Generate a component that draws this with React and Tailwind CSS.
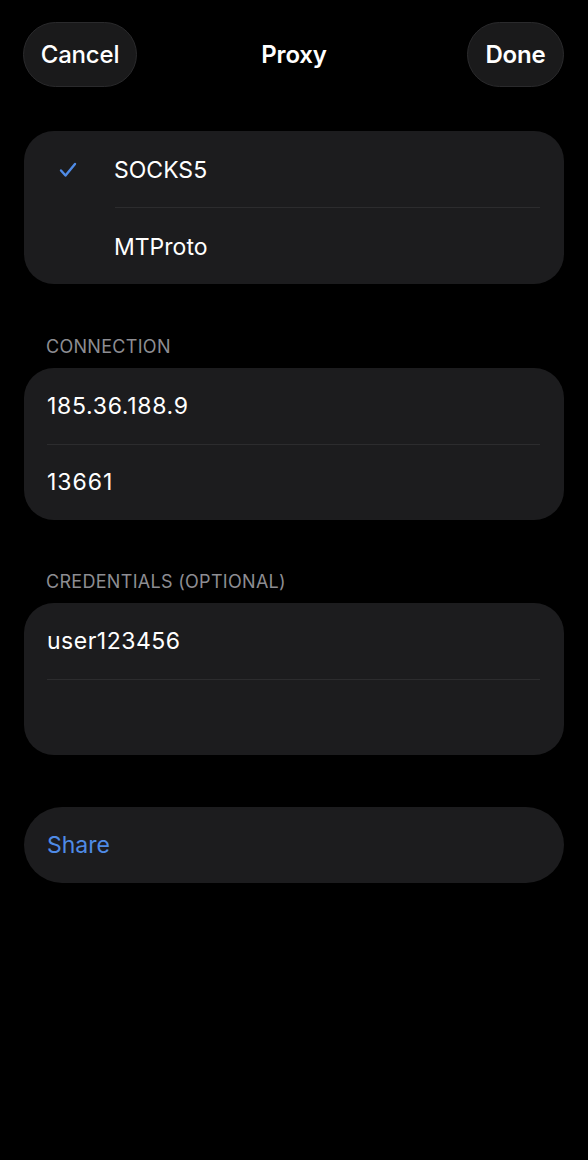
import { useState } from "react";

function Check() {
  return (
    <svg width="18" height="16" viewBox="0 0 18 16" fill="none" className="text-[#4f8be6]">
      <path d="M2 8.5l4.5 5L16 2" stroke="currentColor" strokeWidth="2.4" strokeLinecap="round" strokeLinejoin="round" />
    </svg>
  );
}

function Divider({ inset = "ml-[23px]" }) {
  return <div className={`h-px bg-[#2c2c2e] mr-[24px] ${inset}`} />;
}

function SectionHeader({ children, top = "mt-[52px]" }) {
  return (
    <div className={`${top} mb-[10px] px-[22px] text-[18px] leading-[22px] tracking-[0.3px] text-[#8d8d92]`}>
      {children}
    </div>
  );
}

export default function App() {
  const [type, setType] = useState("SOCKS5");

  return (
    <div
      className="min-h-[1160px] w-full bg-black px-6 text-white"
      style={{ fontFamily: "Inter, 'Noto Sans', sans-serif" }}
    >
      <div className="grid grid-cols-[1fr_auto_1fr] items-center pt-[22px]">
        <div className="flex">
          <button className="-ml-px h-[65px] w-[114px] rounded-full border border-[#2a2a2c] bg-[#1a1a1b] text-[24px] font-medium tracking-[-0.2px]">
            Cancel
          </button>
        </div>
        <div className="text-[24px] font-semibold tracking-[-0.2px]">Proxy</div>
        <div className="flex justify-end">
          <button className="h-[65px] w-[97px] rounded-full border border-[#2a2a2c] bg-[#1a1a1b] text-[24px] font-semibold tracking-[-0.2px]">
            Done
          </button>
        </div>
      </div>

      <div className="mt-[44px] overflow-hidden rounded-[30px] bg-[#1c1c1e]">
        {["SOCKS5", "MTProto"].map((t, i) => (
          <div key={t}>
            {i > 0 && <Divider inset="ml-[91px]" />}
            <button
              onClick={() => setType(t)}
              className="flex h-[76px] w-full items-center pt-[2px] text-left text-[23px]"
            >
              <span className="-ml-[2px] flex w-[92px] justify-center">
                {type === t && <Check />}
              </span>
              <span>{t}</span>
            </button>
          </div>
        ))}
      </div>

      <SectionHeader>CONNECTION</SectionHeader>
      <div className="overflow-hidden rounded-[30px] bg-[#1c1c1e]">
        <div className="flex h-[76px] items-center px-[23px] text-[23px] tracking-[0.7px]">185.36.188.9</div>
        <Divider />
        <div className="flex h-[75px] items-center px-[23px] text-[23px] tracking-[1px]">13661</div>
      </div>

      <SectionHeader top="mt-[51px]">CREDENTIALS (OPTIONAL)</SectionHeader>
      <div className="overflow-hidden rounded-[30px] bg-[#1c1c1e]">
        <div className="flex h-[76px] items-center px-[23px] text-[23px] tracking-[0.5px]">user123456</div>
        <Divider />
        <div className="h-[75px]" />
      </div>

      <div className="mt-[52px] flex h-[76px] items-center rounded-[38px] bg-[#1c1c1e] px-[23px] text-[23px] text-[#4f8be6]">
        Share
      </div>
    </div>
  );
}
